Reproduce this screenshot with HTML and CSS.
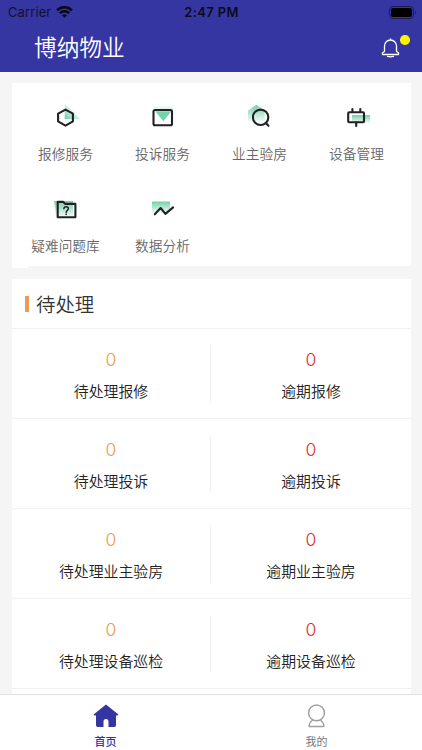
FILE: index.html
```html
<!DOCTYPE html>
<html lang="zh-CN">
<head>
<meta charset="utf-8">
<title>博纳物业</title>
<link rel="stylesheet" href="styles.css">
</head>
<body>
<svg class="defs" width="0" height="0">
  <defs>
    <linearGradient id="down" x1="0" y1="0" x2="0" y2="1"><stop offset="0" stop-color="#73d0a9"/><stop offset="1" stop-color="#73d0a9" stop-opacity=".08"/></linearGradient>
    <linearGradient id="up" x1="0" y1="0" x2="0" y2="1"><stop offset="0" stop-color="#73d0a9" stop-opacity="0"/><stop offset="1" stop-color="#62cba0" stop-opacity=".85"/></linearGradient>
    <linearGradient id="corner" x1="0" y1="1" x2=".6" y2=".4"><stop offset="0" stop-color="#62cda2"/><stop offset="1" stop-color="#73d0a9" stop-opacity=".12"/></linearGradient>
  </defs>
</svg>
<header class="header">
  <div class="status">
    <div class="carrier"><span>Carrier</span>
      <svg width="17" height="12" viewBox="0 0 17 12" fill="none" stroke="#080816" stroke-width="2.3"><path d="M1 4.4C5.2.2 11.800.2 16 4.400M3.700 7.200c2.700-2.600 6.900-2.600 9.600 0"/><path d="M8.500 11.800 5.900 9.200c1.500-1.400 3.700-1.400 5.200 0z" fill="#080816" stroke="none"/></svg>
    </div>
    <span class="clock">2:47 PM</span>
    <svg class="battery" width="28" height="13" viewBox="0 0 28 13"><rect x=".5" y=".5" width="24" height="12" rx="3.500" fill="none" stroke="#1b1b55"/><rect x="2" y="2" width="21" height="9" rx="2" fill="#000"/><path d="M26 4.500q1.800 2 0 4z" fill="#1b1b55"/></svg>
  </div>
  <div class="titlebar">
    <h1>博纳物业</h1>
    <div class="bell">
      <svg width="20" height="20" viewBox="0 0 20 20" fill="none" stroke="#fff" stroke-width="1.300" stroke-linejoin="round" stroke-linecap="round"><path d="M9.500 1v1M3.500 13.500V8a6 6 0 0 1 12 0v5.500l2 1.300v1.700h-16v-1.700zM6.500 18.400q3 .9 6 0"/></svg>
      <i class="dot"></i>
    </div>
  </div>
</header>
<main>
  <section class="services">
    <div class="service"><svg viewBox="0 0 32 32"><path d="M14.700 2.500 30.500 18H14.700z" fill="url(#corner)"/><path class="ink" d="m15.500 8.600 7.400 4v7.800l-7.400 4.200-7.400-4.200v-7.800z"/></svg><span>报修服务</span></div>
    <div class="service"><svg viewBox="0 0 32 32"><path d="M7 4h19v5H7z" fill="url(#up)" opacity=".35"/><path d="M8.300 10.300h16L16.300 20.300z" fill="#76d2ab"/><rect class="ink" x="6.500" y="9" width="18.500" height="15.200" rx="1.500"/></svg><span>投诉服务</span></div>
    <div class="service"><svg viewBox="0 0 32 32"><path d="m12.300 3.800 8.400 6v11H4v-11z" fill="url(#down)"/><circle class="ink" cx="16.600" cy="16.300" r="7.700"/><path class="ink" d="m21.800 22 2.700 2.800"/></svg><span>业主验房</span></div>
    <div class="service"><svg viewBox="0 0 32 32"><path d="M11 14h18v8H11z" fill="url(#down)"/><rect class="ink" x="7.200" y="11.200" width="15.800" height="10" rx="1"/><path class="ink" d="M11.400 8v3M19.300 8v3M15.200 21.500V25"/></svg><span>设备管理</span></div>
    <div class="service"><svg viewBox="0 0 32 32"><path d="M4 8h19v16H6z" fill="url(#down)"/><path class="ink" d="M7.700 24.200V8.900h5.600l1.800 2h10.300v13.300z"/><path class="ink mark" d="M13.900 15.800c0-3 4.500-2.700 4.500-.2 0 1.800-2.200 1.700-2.200 3.600M16.200 21v.4"/></svg><span>疑难问题库</span></div>
    <div class="service"><svg viewBox="0 0 32 32"><path d="M5 8.500h18V20H5z" fill="url(#down)"/><path class="ink" d="m7.800 21.300 5.800-6.300 4.800 5.900 7.700-6.500"/></svg><span>数据分析</span></div>
  </section>
  <section class="pending">
    <h2>待处理</h2>
    <div class="row"><div class="cell"><b>0</b><span>待处理报修</span></div><div class="cell late"><b>0</b><span>逾期报修</span></div></div>
    <div class="row"><div class="cell"><b>0</b><span>待处理投诉</span></div><div class="cell late"><b>0</b><span>逾期投诉</span></div></div>
    <div class="row"><div class="cell"><b>0</b><span>待处理业主验房</span></div><div class="cell late"><b>0</b><span>逾期业主验房</span></div></div>
    <div class="row"><div class="cell"><b>0</b><span>待处理设备巡检</span></div><div class="cell late"><b>0</b><span>逾期设备巡检</span></div></div>
  </section>
</main>
<nav class="tabs">
  <div class="tab active"><svg width="26" height="24" viewBox="0 0 26 24"><path d="M13 .6 24.800 10q1.200 1.400-.8 1.400h-1v9.800q0 1.800-1.800 1.800H15.500v-5.500q0-2.500-2.500-2.500t-2.500 2.500V23H4.800Q3 23 3 21.200v-9.800H2Q0 11.400 1.200 10z" fill="#3535a2"/></svg><span>首页</span></div>
  <div class="tab"><svg width="26" height="24" viewBox="0 0 26 24" fill="none" stroke="#a0a0a0" stroke-width="1.500" stroke-linejoin="round"><circle cx="12.500" cy="8.900" r="7.900"/><path d="M8.500 16c-1.500 1.300-3 3.300-3.400 5.300q-.2 1.200 1 1.200h12.800q1.200 0 1-1.200C19.500 19.300 18 17.300 16.500 16"/></svg><span>我的</span></div>
</nav>
</body>
</html>
```
FILE: styles.css
```css
* { box-sizing: border-box; }
body {
  margin: 0;
  height: 750px;
  overflow: hidden;
  display: flex;
  flex-direction: column;
  background: #f5f5f5;
  color: #333;
  font-family: "Noto Sans CJK SC", sans-serif;
}
.defs { position: absolute; }
.header { flex: none; height: 72px; background: #3636a3; }
.status {
  height: 24px;
  padding: 0 5px 0 8px;
  display: grid;
  grid-template-columns: 1fr auto 1fr;
  align-items: center;
  font: 13px/24px Inter, sans-serif;
  color: #11112e;
}
.carrier { display: flex; align-items: center; gap: 5px; letter-spacing: .1px; }
.clock { font-weight: 600; font-size: 13px; letter-spacing: .35px; color: #0b0b20; transform: translateX(-1px); }
.battery { justify-self: end; }
.titlebar {
  height: 46px;
  padding: 0 21px 0 34px;
  display: flex;
  justify-content: space-between;
  align-items: center;
}
h1 { margin: 0; font-size: 22.700px; line-height: 46px; font-weight: 350; color: #fff; }
.bell { position: relative; height: 20px; width: 20px; top: 1px; }
.bell svg { display: block; }
.dot {
  position: absolute;
  left: 19px;
  top: -3px;
  width: 9.500px;
  height: 9.500px;
  border-radius: 50%;
  background: #fff200;
}
main { flex: 1; min-height: 0; overflow: hidden; padding: 11px 11px 0 12px; }
.services {
  position: relative;
  height: 183px;
  padding: 18px 5px 0;
  display: grid;
  grid-template-columns: repeat(4, 97px);
  grid-auto-rows: 92px;
  background: #fff;
}
.services::after {
  content: "";
  position: absolute;
  left: 0;
  top: 100%;
  width: 16px;
  height: 2px;
  background: #fff;
}
.service { display: flex; flex-direction: column; align-items: center; gap: 10px; }
.service svg { width: 32px; height: 32px; }
.service span { font-size: 13.700px; line-height: 20px; color: #666; font-weight: 350; }
.ink { fill: none; stroke: #222; stroke-width: 2.100; stroke-linecap: round; stroke-linejoin: round; }
.mark { stroke-width: 1.500; }
.pending { margin-top: 13px; height: 430px; background: #fff; }
h2 {
  margin: 0;
  height: 50px;
  padding-left: 13px;
  display: flex;
  align-items: center;
  gap: 7px;
  font-size: 19.400px;
  font-weight: 350;
  border-bottom: 1px solid #f1f1f1;
}
h2::before { content: ""; width: 4px; height: 16px; background: #ed9a55; }
.row {
  height: 90px;
  display: grid;
  grid-template-columns: 198px 1fr;
  align-items: center;
  border-bottom: 1.500px solid #f1f1f1;
}
.cell { height: 58px; padding-top: 2px; display: flex; flex-direction: column; align-items: center; }
.late { border-left: 1px solid #f1f1f1; }
.cell b { font: 350 17.500px/26px Inter, sans-serif; color: #ed9a55; }
.late b { color: #e02b2b; }
.cell span { margin-top: 6px; font-size: 14.900px; line-height: 24px; font-weight: 350; color: #222; }
.tabs {
  flex: none;
  height: 56px;
  display: grid;
  grid-template-columns: 1fr 1fr;
  background: #fff;
  border-top: 1px solid #e2e2e2;
}
.tab { padding-top: 9px; display: flex; flex-direction: column; align-items: center; gap: 5px; font-size: 11px; line-height: 16px; color: #777; }
.active { color: #3535a2; font-weight: 500; }
```
